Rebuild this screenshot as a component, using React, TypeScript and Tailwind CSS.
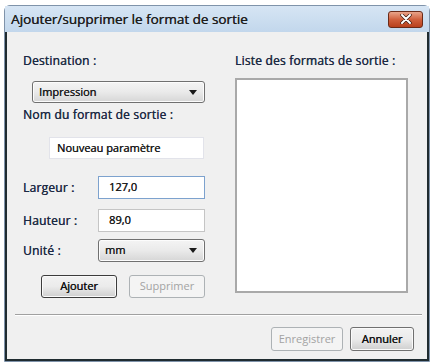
import React from "react";

const font = { fontFamily: '"Open Sans", "Noto Sans", sans-serif' };

function Arrow() {
  return (
    <svg width="8" height="5" viewBox="0 0 8 5" className="shrink-0">
      <path d="M0 0 H8 L4 5 Z" fill="#1a1a1a" />
    </svg>
  );
}

const thick = "[text-shadow:0.35px_0_0_currentColor]";

function Select({ value, className }: { value: string; className: string }) {
  return (
    <div
      className={`flex items-center justify-between rounded-[3px] border border-[#707070] bg-gradient-to-b from-[#f4f4f4] via-[#eaeaea] to-[#d6d6d6] pl-[6px] pr-[7px] text-[11px] text-[#1a1a1a] shadow-[inset_0_0_0_1px_#fcfcfc] ${thick} ${className}`}
    >
      <span>{value}</span>
      <Arrow />
    </div>
  );
}

function Btn({ label, disabled, def, className }: { label: string; disabled?: boolean; def?: boolean; className: string }) {
  return (
    <div
      className={`flex items-center justify-center rounded-[3px] border text-[11px] ${
        disabled
          ? "border-[#adb2b5] bg-[#f4f4f4] text-[#a3a3a3]"
          : def
          ? `border-[#3c3c3c] bg-gradient-to-b from-[#f2f2f2] via-[#ebebeb] to-[#cfcfcf] text-[#111] shadow-[inset_0_0_0_1px_#fafafa] ${thick}`
          : `border-[#707070] bg-gradient-to-b from-[#f2f2f2] via-[#ebebeb] to-[#cfcfcf] text-[#111] shadow-[inset_0_0_0_1px_#fafafa] ${thick}`
      } ${className}`}
    >
      {label}
    </div>
  );
}

const label = "text-[12px] tracking-[0.2px] text-[#1c2a44] [text-shadow:0.35px_0_0_currentColor]";
const val = "text-[11px] text-[#1a1a1a] [text-shadow:0.35px_0_0_currentColor]";

export default function App() {
  return (
    <div className="h-[364px] w-[434px] bg-white pt-[5px] pl-[4px]" style={font}>
      <div className="w-[426px] rounded-t-[6px] border border-[#7f93aa] bg-[#cfe0f1]">
        {/* title bar */}
        <div className="flex h-[26px] items-center justify-between bg-gradient-to-b from-[#d6e5f4] to-[#c2d7ec] pl-[6px] pr-[6px]">
          <span className="text-[13.5px] text-[#1e1e1e] [text-shadow:0.35px_0_0_currentColor]">Ajouter/supprimer le format de sortie</span>
          <div className="flex h-[17px] w-[35px] items-center justify-center rounded-[3px] border border-[#6b2a18] bg-gradient-to-b from-[#e8a48a] via-[#d0603d] to-[#b8401c]">
            <svg width="12" height="10" viewBox="0 0 12 10">
              <path d="M2 1 L10 9 M10 1 L2 9" stroke="#3a1a10" strokeWidth="3.4" strokeLinecap="round" />
              <path d="M2 1 L10 9 M10 1 L2 9" stroke="#ffffff" strokeWidth="2" strokeLinecap="round" />
            </svg>
          </div>
        </div>
        {/* body */}
        <div className="flex h-[329px] flex-col border-x-[2px] border-b-[2px] border-[#1f2b30] bg-[#f0f0f0]">
          <div className="flex gap-[30px] pt-[21px] pl-[16px]">
            {/* left column */}
            <div className="flex w-[182px] flex-col">
              <div className={`h-4 leading-4 ${label}`}>Destination :</div>
              <Select value="Impression" className="mt-[12px] ml-[9px] h-[22px] w-[173px]" />
              <div className={`mt-[4px] h-4 leading-4 ${label}`}>Nom du format de sortie :</div>
              <div className={`mt-[14px] ml-[26px] flex h-[22px] w-[155px] items-center border border-[#e2e3ea] bg-white pl-[7px] ${val}`}>
                Nouveau paramètre
              </div>
              <div className="mt-[17px] flex h-[23px] items-center">
                <span className={`w-[75px] ${label}`}>Largeur :</span>
                <div className={`flex h-[23px] w-[107px] items-center border border-[#7da2ce] bg-white pl-[10px] ${val}`}>
                  127,0
                </div>
              </div>
              <div className="mt-[10px] flex h-[23px] items-center">
                <span className={`w-[75px] ${label}`}>Hauteur :</span>
                <div className={`flex h-[23px] w-[107px] items-center border border-[#c5c5c5] bg-white pl-[10px] ${val}`}>
                  89,0
                </div>
              </div>
              <div className="mt-[7px] flex h-[23px] items-center">
                <span className={`w-[75px] ${label}`}>Unité :</span>
                <Select value="mm" className="h-[23px] w-[107px]" />
              </div>
              <div className="mt-[13px] ml-[18px] flex gap-[12px]">
                <Btn label="Ajouter" def className="h-[23px] w-[76px]" />
                <Btn label="Supprimer" disabled className="h-[23px] w-[76px]" />
              </div>
            </div>
            {/* right column */}
            <div className="flex w-[173px] flex-col">
              <div className={`h-4 leading-4 ${label}`}>Liste des formats de sortie :</div>
              <div className="mt-[9px] h-[215px] w-[173px] border-[2px] border-[#a9a9a9] bg-white" />
            </div>
          </div>
          <div className="mt-[16px] ml-[8px] mr-[5px] h-[2px] border-t border-b border-t-[#a0a0a0] border-b-white" />
          <div className="mt-[11px] flex justify-end gap-[7px] pr-[13px]">
            <Btn label="Enregistrer" disabled className="h-[24px] w-[72px]" />
            <Btn label="Annuler" className="h-[24px] w-[64px]" />
          </div>
        </div>
      </div>
    </div>
  );
}
